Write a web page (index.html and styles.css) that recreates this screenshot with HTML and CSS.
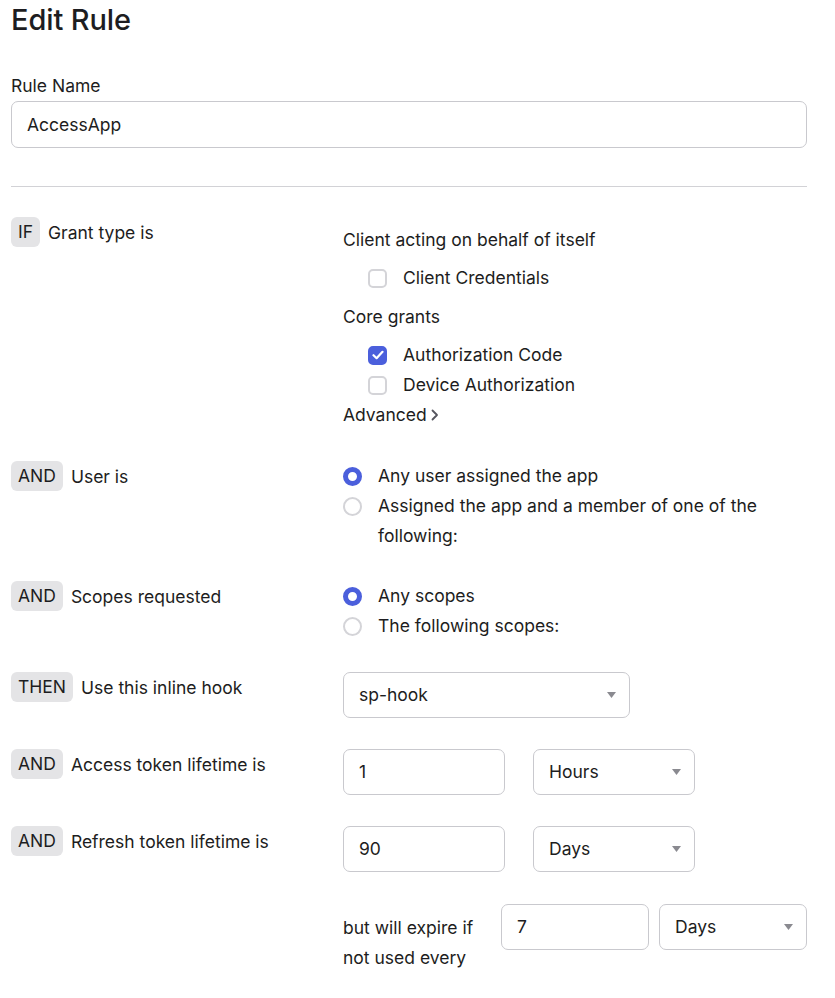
FILE: index.html
```html
<!DOCTYPE html>
<html lang="en">
<head>
<meta charset="utf-8">
<title>Edit Rule</title>
<link rel="stylesheet" href="styles.css">
</head>
<body>
<div class="page">
  <h1 class="title">Edit Rule</h1>
  <div class="field-label">Rule Name</div>
  <div class="text-input name-input">AccessApp</div>
  <hr class="divider">

  <div class="rules">
    <div class="rule">
      <div class="cond"><span class="badge">IF</span><span class="cond-text">Grant type is</span></div>
      <div class="opts opts-grant">
        <div class="group-title">Client acting on behalf of itself</div>
        <div class="check-list">
          <div class="check"><span class="box"></span><span>Client Credentials</span></div>
        </div>
        <div class="group-title second">Core grants</div>
        <div class="check-list">
          <div class="check"><span class="box checked"><svg width="12" height="10" viewBox="0 0 12 10"><path d="M1.5 5.2 L4.6 8.2 L10.5 1.8" fill="none" stroke="#fff" stroke-width="2.2" stroke-linecap="round" stroke-linejoin="round"/></svg></span><span>Authorization Code</span></div>
          <div class="check"><span class="box"></span><span>Device Authorization</span></div>
        </div>
        <div class="advanced"><span>Advanced</span><svg width="9" height="12" viewBox="0 0 9 12"><path d="M2.5 1.5 L7 6 L2.5 10.5" fill="none" stroke="#55555e" stroke-width="1.8" stroke-linecap="round" stroke-linejoin="round"/></svg></div>
      </div>
    </div>

    <div class="rule">
      <div class="cond"><span class="badge">AND</span><span class="cond-text">User is</span></div>
      <div class="opts">
        <div class="radio"><span class="dot on"></span><span>Any user assigned the app</span></div>
        <div class="radio"><span class="dot"></span><span>Assigned the app and a member of one of the following:</span></div>
      </div>
    </div>

    <div class="rule rule-scopes">
      <div class="cond"><span class="badge">AND</span><span class="cond-text">Scopes requested</span></div>
      <div class="opts">
        <div class="radio"><span class="dot on"></span><span>Any scopes</span></div>
        <div class="radio"><span class="dot"></span><span>The following scopes:</span></div>
      </div>
    </div>

    <div class="rule">
      <div class="cond"><span class="badge">THEN</span><span class="cond-text">Use this inline hook</span></div>
      <div class="opts">
        <div class="select hook-select"><span>sp-hook</span><svg class="caret" width="9" height="6" viewBox="0 0 9 6"><path d="M0 0 H9 L4.5 6 Z" fill="#8a8a90"/></svg></div>
      </div>
    </div>

    <div class="rule">
      <div class="cond"><span class="badge">AND</span><span class="cond-text">Access token lifetime is</span></div>
      <div class="opts">
        <div class="pair">
          <div class="text-input num-input">1</div>
          <div class="select unit-select"><span>Hours</span><svg class="caret" width="9" height="6" viewBox="0 0 9 6"><path d="M0 0 H9 L4.5 6 Z" fill="#8a8a90"/></svg></div>
        </div>
      </div>
    </div>

    <div class="rule">
      <div class="cond"><span class="badge">AND</span><span class="cond-text">Refresh token lifetime is</span></div>
      <div class="opts">
        <div class="pair">
          <div class="text-input num-input">90</div>
          <div class="select unit-select"><span>Days</span><svg class="caret" width="9" height="6" viewBox="0 0 9 6"><path d="M0 0 H9 L4.5 6 Z" fill="#8a8a90"/></svg></div>
        </div>
        <div class="expire">
          <div class="expire-text">but will expire if not used every</div>
          <div class="text-input small-input">7</div>
          <div class="select small-select"><span>Days</span><svg class="caret" width="9" height="6" viewBox="0 0 9 6"><path d="M0 0 H9 L4.5 6 Z" fill="#8a8a90"/></svg></div>
        </div>
      </div>
    </div>
  </div>
</div>
</body>
</html>
```

FILE: styles.css
```css
* { box-sizing: border-box; }

body {
  margin: 0;
  background: #ffffff;
  font-family: Inter, "Noto Sans", "Liberation Sans", sans-serif;
  font-size: 17.5px;
  color: #1d1d21;
}

.page {
  width: 807px;
  padding: 0 0 0 11px;
}

.title {
  margin: 0;
  font-size: 29px;
  font-weight: 500;
  line-height: 40px;
  letter-spacing: -0.1px;
}

.field-label {
  margin-top: 34px;
  line-height: 24px;
  margin-bottom: 3px;
}

.text-input,
.select {
  height: 46px;
  border: 1px solid #c9c9ce;
  border-radius: 7px;
  padding: 0 15px;
  display: flex;
  align-items: center;
  line-height: 24px;
  background: #fff;
}

.name-input {
  width: 796px;
  height: 47px;
}

.select {
  justify-content: space-between;
  padding-right: 13px;
}

.caret { flex: none; }

.divider {
  margin: 38px 0 0 0;
  width: 796px;
  border: 0;
  border-top: 1px solid #d2d2d6;
}

.rules {
  margin-top: 30px;
  display: flex;
  flex-direction: column;
  gap: 31px;
}

.rule {
  display: grid;
  grid-template-columns: 332px 1fr;
}

.rule-scopes { margin-top: -1px; }

.cond {
  display: flex;
  align-items: center;
  gap: 8px;
  height: 30px;
}

.badge {
  background: #e4e4e6;
  border-radius: 6px;
  padding: 0 7px;
  line-height: 30px;
  height: 30px;
}

.opts-grant { padding-top: 8px; }

.group-title { line-height: 30px; }
.group-title.second { margin-top: 9px; }

.check-list {
  margin-top: 8px;
  padding-left: 25px;
}

.check,
.radio {
  display: flex;
  line-height: 30px;
}

.check { align-items: center; gap: 16px; }

.box {
  flex: none;
  width: 19px;
  height: 19px;
  border: 2px solid #d4d4d8;
  border-radius: 5px;
  display: flex;
  align-items: center;
  justify-content: center;
}

.box.checked {
  background: #4b5fdc;
  border-color: #4b5fdc;
}

.advanced {
  line-height: 30px;
  display: flex;
  align-items: center;
  gap: 3px;
}

.radio { gap: 16px; align-items: flex-start; }

.dot {
  flex: none;
  width: 19px;
  height: 19px;
  margin-top: 6px;
  border-radius: 50%;
  border: 2px solid #d4d4d8;
  background: #fff;
}

.dot.on {
  border: 5.5px solid #4b5fdc;
}

.hook-select { width: 287px; }

.pair {
  display: flex;
  gap: 28px;
}

.num-input,
.unit-select { width: 162px; }

.expire {
  margin-top: 32px;
  display: flex;
  gap: 10px;
  align-items: flex-start;
}

.expire-text {
  width: 148px;
  padding-top: 9px;
  line-height: 30px;
}

.small-input,
.small-select { width: 148px; }
```
